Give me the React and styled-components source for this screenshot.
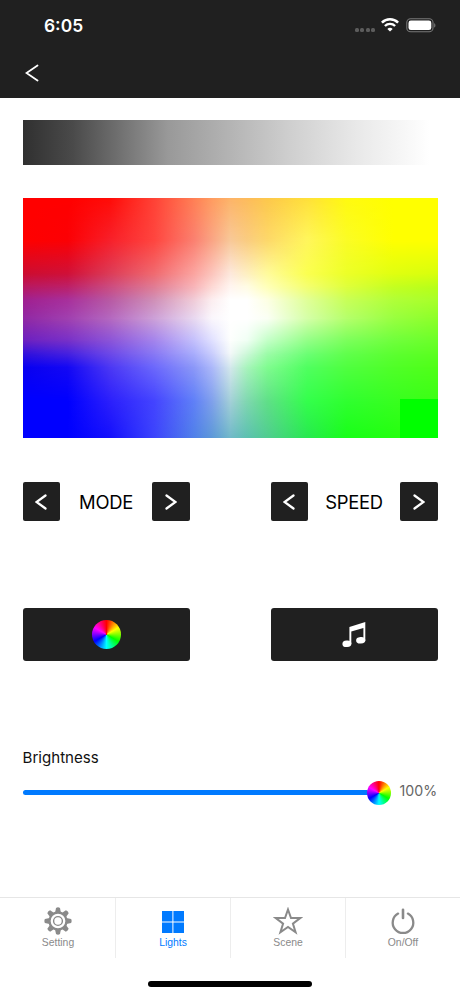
import React from "react";
import styled, { createGlobalStyle } from "styled-components";

const columns = [0, 10.7, 21, 31.6, 41.2, 45.5, 50, 54, 58.9, 68.5, 78, 89.4, 100];

// each row is blended into the one above it, "at" is the vertical position in %
const colorRows = [
  {
    at: 0,
    colors: "#ff0000 #ff0000 #ff0c08 #ff4236 #ff8055 #ff9c60 #fdb468 #fdbc5c #fdc84c #ffe03a #fffa10 #ffff00 #ffff00",
  },
  {
    at: 17.5,
    colors: "#ff0000 #fc0004 #f8202a #ff453f #fb8070 #faa484 #f8c898 #facc80 #fdd86a #fff65c #fbfc25 #ffff00 #ffff00",
  },
  {
    at: 31.5,
    colors: "#cc0c30 #d01038 #dc3c58 #f06a70 #fba4a0 #fcc4bc #fde8dc #feefc0 #fffb9c #fbff50 #ecff28 #e0ff10 #d8ff0c",
  },
  {
    at: 37,
    colors: "#b81860 #bc2068 #cc4c80 #e07c94 #f8b4b8 #fdd8d4 #fff5f0 #fffce4 #ffffb8 #f4ff70 #deff3c #c4ff20 #b8ff18",
  },
  {
    at: 42.6,
    colors: "#a02090 #a8309c #b85aa4 #d090b8 #f0ccd8 #fceef0 #ffffff #ffffff #fdffe4 #e0ff98 #c8ff58 #b0ff38 #a8ff28",
  },
  {
    at: 50.3,
    colors: "#9028a4 #a040b0 #b468c0 #cca0d8 #e8d8f0 #faf6fc #ffffff #ffffff #fafff4 #d4ffa8 #b4ff6c #98ff40 #8cff28",
  },
  {
    at: 59.3,
    colors: "#6c20c0 #7830c8 #8c54d8 #a484ec #c4c0fc #e0e0ff #fdfffd #f0fff4 #c4ffc8 #94ff88 #7cff5c #70ff3c #6cff28",
  },
  {
    at: 65,
    colors: "#3010dc #4420e0 #6c48e8 #8878f4 #a8acfc #c8ccfd #f2f8f8 #ccf8d8 #9cfca8 #6cff74 #60ff4c #5cff30 #5cff20",
  },
  {
    at: 70.5,
    colors: "#0800f0 #1408f4 #4c38f4 #6c68fc #8c98f8 #acb8fa #d4e8ec #a8f4bc #80fc90 #50ff60 #50ff40 #50ff28 #50ff18",
  },
  {
    at: 84.4,
    colors: "#0000ff #0000ff #2c20fc #4444ff #6080f8 #80a0ec #a4d0d8 #80d8b0 #60e088 #34ff4c #30ff30 #38ff20 #3cff14",
  },
  {
    at: 100,
    colors: "#0000ff #0000ff #1410fc #3c44fc #5080e8 #5c98d8 #70b8c8 #5cc0b0 #50cc90 #28e850 #18ff18 #24ff10 #30ff10",
  },
];

const toGradient = (colors) =>
  colors
    .split(" ")
    .map((color, index) => `${color} ${columns[index]}%`)
    .join(", ");

const WifiIcon = () => (
  <svg width="18" height="14" viewBox="0 0 18 14" fill="none" stroke="#fff">
    <path d="M0.9 4.7a11.5 11.5 0 0 1 16.2 0" strokeWidth="2.5" />
    <path d="M3.9 8a7.2 7.2 0 0 1 10.2 0" strokeWidth="2.4" />
    <path d="M9 13.6L6.3 11a3.8 3.8 0 0 1 5.4 0z" fill="#fff" stroke="none" />
  </svg>
);

const BatteryIcon = () => (
  <svg width="30" height="15" viewBox="0 0 30 15">
    <rect x="0.8" y="0.8" width="26.2" height="13" rx="3.8" fill="none" stroke="#777" strokeWidth="1.1" />
    <rect x="2.5" y="2.5" width="22.8" height="9.6" rx="2.4" fill="#fff" />
    <path d="M28.2 5.2c1.6.5 1.6 3.9 0 4.4z" fill="#777" />
  </svg>
);

const Chevron = ({ right, width = 12, height = 16, stroke = 2.3 }) => (
  <svg width={width} height={height} viewBox={`0 0 ${width} ${height}`} fill="none" stroke="#fff" strokeWidth={stroke}>
    <path
      d={
        right
          ? `M1.5 1.5L${width - 1.5} ${height / 2}L1.5 ${height - 1.5}`
          : `M${width - 1.5} 1.5L1.5 ${height / 2}L${width - 1.5} ${height - 1.5}`
      }
      strokeLinecap="round"
    />
  </svg>
);

const MusicIcon = () => (
  <svg width="24" height="27" viewBox="0 0 24 27" fill="#fff">
    <path d="M7.4 5.9L23.3 0.9V20H21.4V7L9.3 10.6V23H7.4z" />
    <ellipse cx="4.9" cy="22.8" rx="4.5" ry="3.2" transform="rotate(-5 4.9 22.8)" />
    <ellipse cx="18.7" cy="19.3" rx="4.6" ry="3.2" transform="rotate(-5 18.7 19.3)" />
  </svg>
);

const GearIcon = () => (
  <svg width="28" height="28" viewBox="-14 -14 28 28" fill="none" stroke="#8a8a8a">
    {[0, 45, 90, 135, 180, 225, 270, 315].map((angle) => (
      <path
        key={angle}
        d="M-2.9 -8.4L-2 -13.1Q0 -14.2 2 -13.1L2.9 -8.4z"
        transform={`rotate(${angle})`}
        fill="#8a8a8a"
        stroke="none"
      />
    ))}
    <circle r="8.5" strokeWidth="2.3" />
    <circle r="4.4" strokeWidth="1.4" />
  </svg>
);

const GridIcon = () => (
  <svg width="28" height="28" viewBox="0 0 28 28" fill="#007aff">
    <path d="M3 4h10.4v10.4H3zM14.4 4H25v10.4H14.4zM3 15.4h10.4V26H3zM14.4 15.4H25V26H14.4z" />
  </svg>
);

const StarIcon = () => (
  <svg width="30" height="28" viewBox="0 0 30 28" fill="none" stroke="#8a8a8a" strokeWidth="2">
    <path d="M15 2.5L18 11.1H27.2L19.9 16.6L22.6 25.3L15 20L7.4 25.3L10.1 16.6L2.8 11.1H12z" />
  </svg>
);

const PowerIcon = () => (
  <svg width="28" height="28" viewBox="0 0 28 28" fill="none" stroke="#8a8a8a" strokeLinecap="round">
    <path d="M9.1 6.6a10.3 10.3 0 1 0 9.8 0" strokeWidth="2.3" />
    <path d="M14 2.8V11" strokeWidth="2.6" />
  </svg>
);

const Stepper = ({ label }) => (
  <StepperContainer>
    <StepButton>
      <Chevron />
    </StepButton>
    <StepperLabel>{label}</StepperLabel>
    <StepButton>
      <Chevron right />
    </StepButton>
  </StepperContainer>
);

const tabs = [
  { label: "Setting", Icon: GearIcon },
  { label: "Lights", Icon: GridIcon, active: true },
  { label: "Scene", Icon: StarIcon },
  { label: "On/Off", Icon: PowerIcon },
];

const App = () => {
  const brightness = 100;

  return (
    <Screen>
      <GlobalStyle />
      <Header>
        <StatusBar>
          <Time>6:05</Time>
          <StatusIcons>
            <Signal>
              <i />
              <i />
              <i />
              <i />
            </Signal>
            <WifiIcon />
            <BatteryIcon />
          </StatusIcons>
        </StatusBar>
        <BackButton>
          <Chevron width={14} height={18} stroke={1.8} />
        </BackButton>
      </Header>
      <Content>
        <WhiteBar />
        <ColorPicker>
          {colorRows.map((row, index) => (
            <ColorRow
              key={row.at}
              colors={row.colors}
              from={index ? colorRows[index - 1].at : -1}
              to={row.at}
            />
          ))}
          <PickedColor />
        </ColorPicker>
        <Steppers>
          <Stepper label="MODE" />
          <Stepper label="SPEED" />
        </Steppers>
        <Actions>
          <ActionButton>
            <ColorWheel size="29px" />
          </ActionButton>
          <ActionButton>
            <MusicIcon />
          </ActionButton>
        </Actions>
        <BrightnessLabel>Brightness</BrightnessLabel>
        <BrightnessRow>
          <Track />
          <ColorWheel size="24px" />
          <BrightnessValue>{brightness}%</BrightnessValue>
        </BrightnessRow>
      </Content>
      <TabBar>
        {tabs.map(({ label, Icon, active }) => (
          <Tab key={label} $active={active}>
            <Icon />
            <span>{label}</span>
          </Tab>
        ))}
      </TabBar>
      <HomeArea>
        <HomeIndicator />
      </HomeArea>
    </Screen>
  );
};

const GlobalStyle = createGlobalStyle`
  * {
    box-sizing: border-box;
  }
  body {
    margin: 0;
    background-color: #fff;
    font-family: Inter, "Liberation Sans", sans-serif;
  }
  svg {
    display: block;
    flex: none;
  }
  button {
    border: 0;
    padding: 0;
    font: inherit;
  }
`;

const Screen = styled.div`
  display: flex;
  flex-direction: column;
  width: 460px;
  height: 996px;
  overflow: hidden;
`;

const Header = styled.header`
  height: 98px;
  background-color: #202020;
`;

const StatusBar = styled.div`
  display: flex;
  justify-content: space-between;
  height: 50px;
  padding: 0 24px 0 44px;
`;

const Time = styled.span`
  padding-top: 15px;
  color: #fff;
  font-size: 17.4px;
  font-weight: 600;
  line-height: 21px;
`;

const StatusIcons = styled.div`
  display: flex;
  align-items: flex-start;
  padding-top: 18px;
  & svg + svg {
    margin-left: 7px;
  }
`;

const Signal = styled.div`
  display: flex;
  gap: 1.5px;
  margin: 10px 6px 0 0;
  & i {
    width: 4px;
    height: 4px;
    border-radius: 1.5px;
    background-color: #5c5c5c;
  }
`;

const BackButton = styled.button`
  display: block;
  margin: 14px 0 0 25px;
  background: none;
`;

const Content = styled.main`
  flex: 1;
  padding: 22px 22.5px 0;
`;

const WhiteBar = styled.div`
  height: 45px;
  background-image: linear-gradient(
    to right,
    #303030,
    #4a4a4a 12%,
    #6c6c6c 22%,
    #999 35%,
    #b4b4b4 50%,
    #d0d0d0 65%,
    #e8e8e8 80%,
    #fff 98%
  );
`;

const ColorPicker = styled.div`
  display: grid;
  height: 240px;
  margin-top: 33px;
`;

const ColorRow = styled.div.withConfig({
  shouldForwardProp: (prop) => !["colors", "from", "to"].includes(prop),
})`
  grid-area: 1 / 1;
  background-image: linear-gradient(to right, ${({ colors }) => toGradient(colors)});
  mask-image: linear-gradient(
    to bottom,
    transparent ${({ from }) => from}%,
    #000 ${({ to }) => to}%
  );
`;

const PickedColor = styled.div`
  grid-area: 1 / 1;
  place-self: end;
  z-index: 1;
  width: 38px;
  height: 39px;
  background-color: #00ff00;
`;

const Steppers = styled.div`
  display: flex;
  justify-content: space-between;
  margin-top: 44px;
`;

const StepperContainer = styled.div`
  display: flex;
  align-items: center;
  justify-content: space-between;
  width: 167px;
`;

const StepButton = styled.button`
  display: grid;
  place-items: center;
  width: 37.5px;
  height: 39px;
  border-radius: 2px;
  background-color: #202020;
`;

const StepperLabel = styled.span`
  color: #000;
  font-size: 18.4px;
  letter-spacing: -0.3px;
`;

const Actions = styled.div`
  display: flex;
  justify-content: space-between;
  margin-top: 87px;
`;

const ActionButton = styled.button`
  display: grid;
  place-items: center;
  width: 167px;
  height: 53px;
  border-radius: 3px;
  background-color: #202020;
`;

const ColorWheel = styled.div`
  flex: none;
  width: ${({ size }) => size};
  height: ${({ size }) => size};
  border-radius: 50%;
  background-image: conic-gradient(
    #f00,
    #ff0 60deg,
    #0f0 120deg,
    #0ff 180deg,
    #00f 240deg,
    #f0f 300deg,
    #f00
  );
`;

const BrightnessLabel = styled.p`
  margin: 87px 0 0;
  color: #111;
  font-size: 15.1px;
  line-height: 20px;
`;

const BrightnessRow = styled.div`
  display: flex;
  align-items: center;
  height: 24px;
  margin-top: 12.5px;
`;

const Track = styled.div`
  width: 346px;
  height: 5.5px;
  margin-right: -2px;
  border-radius: 3px;
  background-color: #007aff;
`;

const BrightnessValue = styled.span`
  margin: -4px 0 0 9px;
  color: #666;
  font-size: 14.2px;
`;

const TabBar = styled.nav`
  display: grid;
  grid-template-columns: repeat(4, 1fr);
  height: 61px;
  border-top: 1px solid #e6e6e6;
`;

const Tab = styled.a`
  display: flex;
  flex-direction: column;
  align-items: center;
  padding-top: 9px;
  border-left: 1px solid #ededed;
  color: ${({ $active }) => ($active ? "#007aff" : "#8a8a8a")};
  font-family: "Liberation Sans", Arial, sans-serif;
  font-size: 10.4px;
  line-height: 15px;
  &:first-child {
    border-color: transparent;
  }
`;

const HomeArea = styled.div`
  display: flex;
  justify-content: center;
  height: 38px;
  padding-top: 23px;
`;

const HomeIndicator = styled.div`
  width: 164px;
  height: 5.5px;
  border-radius: 3px;
  background-color: #000;
`;

export default App;
